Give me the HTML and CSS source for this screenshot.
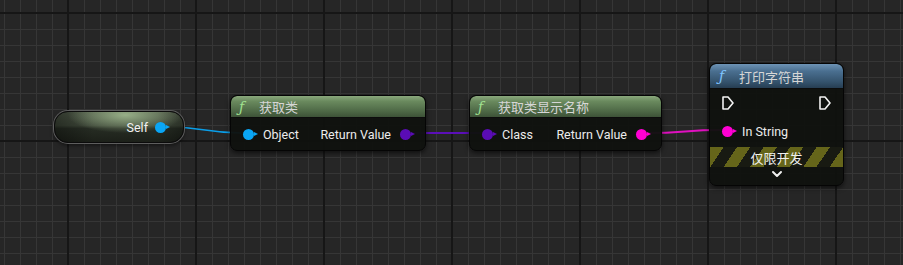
FILE: index.html
```html
<!DOCTYPE html>
<html lang="zh">
<head>
    <meta charset="UTF-8">
    <title>蓝图</title>
    <link rel="stylesheet" href="styles.css">
</head>
<body>
    <div class="graph">
        <!-- connections -->
        <svg class="wires" width="903" height="265" viewBox="0 0 903 265">
            <path d="M167 127 C205 127, 205 133, 241 133" stroke="#0a9ee8" stroke-width="1.6" fill="none"/>
            <path d="M410 133 L481 133" stroke="#5b0fb8" stroke-width="2" fill="none"/>
            <path d="M647 133 C685 133, 685 130, 721 130" stroke="#e010c0" stroke-width="2" fill="none"/>
        </svg>

        <div class="self-node">
            <span class="self-label">Self</span>
            <span class="pin pin-blue"></span>
        </div>

        <div class="node node-get-class">
            <div class="node-header header-green">
                <span class="fn fn-green">ƒ</span>获取类
            </div>
            <div class="node-body">
                <div class="row">
                    <span class="side"><span class="pin pin-blue"></span>Object</span>
                    <span class="side">Return Value<span class="pin pin-purple"></span></span>
                </div>
            </div>
        </div>

        <div class="node node-display-name">
            <div class="node-header header-green">
                <span class="fn fn-green">ƒ</span>获取类显示名称
            </div>
            <div class="node-body">
                <div class="row">
                    <span class="side"><span class="pin pin-purple"></span>Class</span>
                    <span class="side">Return Value<span class="pin pin-pink"></span></span>
                </div>
            </div>
        </div>

        <div class="node node-print">
            <div class="node-header header-blue">
                <span class="fn fn-blue">ƒ</span>打印字符串
            </div>
            <div class="node-body print-body">
                <div class="row exec-row">
                    <svg class="exec" width="12" height="14" viewBox="0 0 12 14"><path d="M1 1 H6 L11 7 L6 13 H1 Z" fill="none" stroke="#f2f2f2" stroke-width="1.6" stroke-linejoin="round"/></svg>
                    <svg class="exec" width="12" height="14" viewBox="0 0 12 14"><path d="M1 1 H6 L11 7 L6 13 H1 Z" fill="none" stroke="#f2f2f2" stroke-width="1.6" stroke-linejoin="round"/></svg>
                </div>
                <div class="row">
                    <span class="side"><span class="pin pin-pink"></span>In String</span>
                </div>
            </div>
            <div class="dev-band">仅限开发</div>
            <div class="chevron">
                <svg width="12" height="8" viewBox="0 0 12 8"><path d="M2 2 L6 6 L10 2" fill="none" stroke="#f0f0f0" stroke-width="2" stroke-linecap="round" stroke-linejoin="round"/></svg>
            </div>
        </div>
    </div>
</body>
</html>
```
FILE: styles.css
```css
* {
    box-sizing: border-box;
}

body {
    margin: 0;
    background-color: #262626;
    font-family: Roboto, "Noto Sans CJK SC", sans-serif;
    overflow: hidden;
}

.graph {
    position: relative;
    width: 903px;
    height: 265px;
    background-color: #262626;
    background-image:
        linear-gradient(to right, #161616 2px, transparent 2px),
        linear-gradient(to bottom, #161616 2px, transparent 2px),
        linear-gradient(to right, #363636 1px, transparent 1px),
        linear-gradient(to bottom, #363636 1px, transparent 1px);
    background-size: 128px 128px, 128px 128px, 16px 16px, 16px 16px;
    background-position: 67px 12px, 67px 12px, 4px 13px, 4px 13px;
}

.wires {
    position: absolute;
    left: 0;
    top: 0;
    z-index: 1;
}

/* pins */
.pin {
    position: relative;
    display: inline-block;
    width: 11px;
    height: 11px;
    border-radius: 50%;
    flex-shrink: 0;
}

.pin::after {
    content: "";
    position: absolute;
    right: -4px;
    top: 3px;
    border-left: 4px solid;
    border-top: 2.5px solid transparent;
    border-bottom: 2.5px solid transparent;
    border-left-color: inherit;
}

.pin-blue {
    background-color: #0aa6f5;
    border-color: #0aa6f5;
}

.pin-purple {
    background-color: #5a0cb5;
    border-color: #5a0cb5;
}

.pin-pink {
    background-color: #ff00d4;
    border-color: #ff00d4;
}

/* self node */
.self-node {
    position: absolute;
    left: 54px;
    top: 111px;
    width: 130px;
    height: 32px;
    z-index: 2;
    display: flex;
    align-items: center;
    justify-content: flex-end;
    gap: 7px;
    padding-right: 17px;
    border-radius: 14px;
    border: 1px solid #0b0b0b;
    box-shadow: 0 0 0 1px #5e5e5e, 0 2px 4px rgba(0, 0, 0, 0.6);
    background:
        radial-gradient(ellipse 45% 60% at 55% 10%, rgba(185, 215, 165, 0.7), transparent 100%),
        linear-gradient(to right, rgba(0, 0, 0, 0.35) 0%, transparent 30%, transparent 80%, rgba(0, 0, 0, 0.3) 100%),
        linear-gradient(to bottom, #4a5444 0%, #3b4436 45%, #262c23 55%, #1c2019 100%);
}

.self-label {
    color: #f2f2f2;
    font-size: 12.5px;
}

/* function nodes */
.node {
    position: absolute;
    z-index: 2;
    border-radius: 7px;
    border: 1px solid #050505;
    background-color: rgba(16, 18, 15, 0.96);
    box-shadow: 0 2px 5px rgba(0, 0, 0, 0.6);
    overflow: hidden;
}

.node-get-class {
    left: 230px;
    top: 95px;
    width: 196px;
    height: 56px;
}

.node-display-name {
    left: 469px;
    top: 95px;
    width: 193px;
    height: 56px;
}

.node-print {
    left: 709px;
    top: 63px;
    width: 135px;
    height: 123px;
}

.node-header {
    height: 22px;
    display: flex;
    align-items: center;
    padding-left: 8px;
    color: #d6d6d6;
    font-size: 13px;
    border-radius: 6px 6px 0 0;
    border-bottom: 1px solid #0c0c0c;
}

.header-green {
    background: linear-gradient(to bottom, #8aa87c 0%, #6a8a5e 25%, #4f6a47 70%, #3d5237 100%);
}

.header-blue {
    height: 25px;
    padding-left: 9px;
    background: linear-gradient(to bottom, #6d93b5 0%, #4a6f90 30%, #34526c 75%, #263d52 100%);
}

.fn {
    font-family: "DejaVu Serif", serif;
    font-style: italic;
    font-size: 14px;
    width: 14px;
    margin-right: 6px;
}

.fn-green {
    color: #9fe08f;
}

.fn-blue {
    color: #7fc4ff;
}

.node-body {
    padding: 6px 14px 0 12px;
}

.row {
    height: 20px;
    display: flex;
    align-items: center;
    justify-content: space-between;
    color: #ececec;
    font-size: 12.5px;
}

.side {
    display: flex;
    align-items: center;
    gap: 9px;
}

.print-body {
    padding: 4px 12px 0 12px;
}

.exec-row {
    height: 20px;
    margin-bottom: 8px;
}

.dev-band {
    margin-top: 6px;
    height: 20px;
    display: flex;
    align-items: center;
    justify-content: center;
    color: #f0f0f0;
    font-size: 13px;
    background: repeating-linear-gradient(-56deg, #65651a 0 11px, #181a12 11px 22px);
}

.chevron {
    display: flex;
    justify-content: center;
    padding-top: 3px;
}
```
